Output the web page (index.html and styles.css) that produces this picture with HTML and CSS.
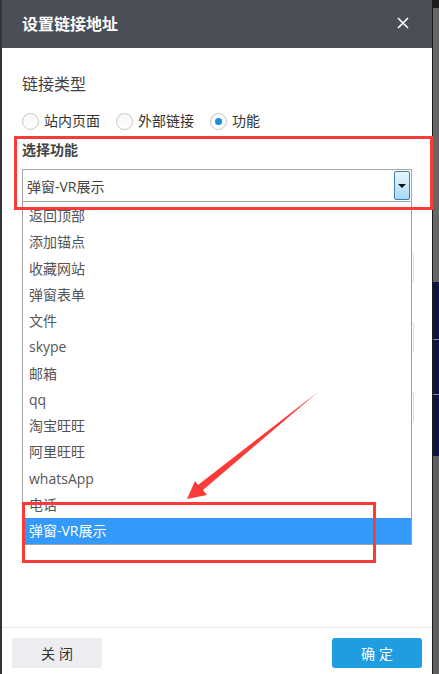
FILE: index.html
```html
<!DOCTYPE html>
<html lang="zh-CN">
<head>
  <meta charset="UTF-8" />
  <meta name="viewport" content="width=device-width, initial-scale=1.0">
  <title>设置链接地址</title>
  <link rel="stylesheet" href="styles.css">
</head>
<body>
  <div class="screen">
    <div class="edge-left"></div>
    <div class="dialog">
      <div class="dialog-head">
        <h2>设置链接地址</h2>
        <span class="close">
          <svg width="12" height="12" viewBox="0 0 12 12"><path d="M1 1 L11 11 M11 1 L1 11" stroke="#fff" stroke-width="1.6" fill="none"/></svg>
        </span>
      </div>
      <div class="dialog-body">
        <h3 class="field-title">链接类型</h3>
        <div class="radios">
          <label class="radio-item"><span class="radio"></span>站内页面</label>
          <label class="radio-item"><span class="radio"></span>外部链接</label>
          <label class="radio-item"><span class="radio checked"></span>功能</label>
        </div>
        <div class="field-label">选择功能</div>
        <div class="select">
          <span class="select-value">弹窗-VR展示</span>
          <span class="select-btn"></span>
          <ul class="options">
            <li>返回顶部</li>
            <li>添加锚点</li>
            <li>收藏网站</li>
            <li>弹窗表单</li>
            <li>文件</li>
            <li>skype</li>
            <li>邮箱</li>
            <li>qq</li>
            <li>淘宝旺旺</li>
            <li>阿里旺旺</li>
            <li>whatsApp</li>
            <li>电话</li>
            <li class="active">弹窗-VR展示</li>
          </ul>
        </div>
        <div class="ghost-input first"></div>
        <div class="ghost-input"></div>
        <div class="ghost-input"></div>
      </div>
      <div class="dialog-foot">
        <button class="btn btn-close">关闭</button>
        <button class="btn btn-ok">确定</button>
      </div>
    </div>
    <div class="edge-right"></div>

    <!-- annotation marks drawn over the screenshot -->
    <svg class="marks" width="439" height="674" viewBox="0 0 439 674">
      <rect x="15.5" y="137.5" width="416" height="71" fill="none" stroke="#fb3a3a" stroke-width="3"/>
      <rect x="23.5" y="503.5" width="351" height="58" fill="none" stroke="#fb3a3a" stroke-width="3"/>
      <polygon points="318,392 203,490 207,495 187,499 195,481 198,485" fill="#fb3a3a"/>
    </svg>
  </div>
</body>
</html>
```

FILE: styles.css
```css
* { box-sizing: border-box; }
body { margin: 0; background: #2e2e2e; font-family: "Open Sans", "Noto Sans CJK SC", sans-serif; }
.screen { display: flex; height: 674px; position: relative; overflow: hidden; }
.edge-left { width: 2px; background: #333; }
.edge-right { width: 7px; border-left: 1px solid #1b1b1b; background: linear-gradient(to bottom, #1d1d1d 0 8px, #666 8px 282px, #0b1442 282px 339px, #7f89a6 339px 340px, #0b1442 340px 394px, #7f89a6 394px 395px, #0b1442 395px 456px, #5e5e5e 456px); }
.dialog { width: 430px; background: #fff; display: flex; flex-direction: column; }

.dialog-head { height: 48px; background: #4a4e56; display: flex; align-items: center; justify-content: space-between; padding: 0 23px 0 20px; }
.dialog-head h2 { margin: 0; font-size: 16px; font-weight: bold; color: #fff; line-height: 20px; }
.close { display: flex; width: 12px; height: 12px; margin-top: -2px; }

.dialog-body { height: 579px; padding: 26px 20px 0; }
.field-title { margin: 0; font-size: 16px; font-weight: normal; line-height: 21px; color: #3f3f3f; }
.radios { display: flex; gap: 16px; margin-top: 17px; height: 18px; }
.radio-item { display: flex; align-items: center; gap: 5px; font-size: 14px; color: #333; line-height: 18px; }
.radio { width: 17px; height: 17px; border: 1px solid #c6c6c6; border-radius: 50%; background: linear-gradient(#f7f7f7, #fff); display: flex; align-items: center; justify-content: center; }
.radio.checked::after { content: ""; width: 7px; height: 7px; border-radius: 50%; background: #1a8ee0; }

.field-label { margin-top: 11px; font-size: 14px; font-weight: bold; color: #444; line-height: 18px; }
.select { position: relative; margin-top: 10px; height: 33px; border: 1px solid #a5a5a5; display: flex; align-items: center; justify-content: space-between; padding: 0 1px 0 4px; }
.select-value { font-size: 14px; color: #444; }
.select-btn { width: 16px; height: 29px; border: 1px solid #3c7fb1; border-radius: 2px; background: linear-gradient(#eaf6fd, #a7d8f7); display: flex; align-items: center; justify-content: center; }
.select-btn::after { content: ""; border-left: 4px solid transparent; border-right: 4px solid transparent; border-top: 4px solid #111; }

.options { position: absolute; left: -1px; right: -1px; top: 32px; margin: 0; padding: 1px 0 0 2px; list-style: none; background: #fff; border: 1px solid #a0a0a0; border-top: none; z-index: 2; }
.options li { height: 26.25px; line-height: 26px; padding-left: 4px; font-size: 14px; color: #555; }
.options li.active { background: #3399fb; color: #fff; }

.ghost-input { height: 31px; width: calc(100% + 2px); border: 1px solid #dcdcdc; border-radius: 3px; margin-top: 39px; }
.ghost-input.first { margin-top: 50px; }

.dialog-foot { border-top: 1px solid #e6e6e6; padding: 10px 10px 0; display: flex; justify-content: space-between; flex: 1; }
.btn { width: 90px; height: 30px; border: none; border-radius: 3px; font-family: inherit; font-size: 14px; letter-spacing: 4px; text-indent: 4px; }
.btn-close { background: #ebedf0; color: #333; }
.btn-ok { background: #1f9de0; color: #fff; }

.marks { position: absolute; left: 0; top: 0; pointer-events: none; z-index: 5; }
```
